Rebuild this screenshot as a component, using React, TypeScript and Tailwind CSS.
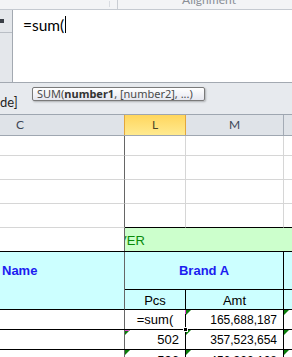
const Tri = () => (
  <span className="absolute top-0 left-0 w-0 h-0 border-t-[5px] border-r-[5px] border-t-[#0a7d0a] border-r-transparent" />
);

const gridRows = [20, 24, 24, 24];

export default function App() {
  return (
    <div className="w-[292px] h-[357px] overflow-hidden bg-white font-['Liberation_Sans',Arial,sans-serif] text-black">
      {/* ribbon bottom edge */}
      <div className="h-[10px] flex bg-[#f3f4f6] border-b border-[#c5cad1] overflow-hidden">
        <div className="w-[110px] border-r border-[#d9dce1] mt-[1px] h-[6px]" />
        <div className="w-[8px] border-r border-[#c9cdd3]" />
        <div className="flex-1 flex justify-center">
          <span className="-mt-[9px] text-[12px] text-[#8a8f96] font-['Lato',sans-serif] pl-[8px]">Alignment</span>
        </div>
      </div>

      {/* formula bar */}
      <div className="h-[73px] flex border-b border-[#a3a9b1]">
        <div className="w-[12px] bg-[#e4e7eb] flex flex-col">
          <div className="h-[23px] border-b border-[#b9bec5] relative">
            <span className="absolute left-0 top-[9px] w-[4px] h-[4px] bg-[#3a3f47]" />
          </div>
        </div>
        <div className="flex-1 bg-white border-l border-[#a3a9b1] pl-[10px] pt-[6px] flex items-start">
          <span className="font-['Lato',sans-serif] text-[15.5px] leading-[18px]">=sum(</span>
          <span className="w-[1px] h-[17px] bg-black ml-[1px]" />
        </div>
      </div>

      {/* area under formula bar, with the function tooltip */}
      <div className="h-[32px] bg-[#e7eaee] border-b border-[#9ea6b0] relative">
        <span className="absolute left-0 top-[12px] text-[13px] leading-[14px] text-[#222] font-['Lato',sans-serif]">de]</span>
        <div className="absolute left-[32px] top-[4px] w-[173px] h-[14px] rounded-[2px] border border-[#7a7a7a] bg-gradient-to-b from-white to-[#e6e7ef] shadow-[1px_1px_2px_rgba(0,0,0,0.25)] pl-[4px] flex items-center">
          <span className="font-['Noto_Sans',sans-serif] text-[11px] leading-[12px] text-[#4a4a4a] whitespace-nowrap">
            SUM(<b className="font-bold text-[#333]">number1</b>, [number2], ...)
          </span>
        </div>
      </div>

      {/* column headers */}
      <div className="h-[21px] flex bg-[#dfe3e8] border-b border-[#9fa7b1] font-['Lato',sans-serif] text-[12px] text-[#3b4656]">
        <div className="w-[124px] pl-[16px] flex items-center">C</div>
        <div className="w-[62px] border-x border-[#e3a73b] bg-gradient-to-b from-[#ffd65c] to-[#ffea8f] flex items-center justify-center text-[#4a4426]">L</div>
        <div className="w-[98px] border-r border-[#a4abb5] flex items-center justify-center">M</div>
        <div className="flex-1" />
      </div>

      {/* empty rows */}
      {gridRows.map((h, i) => (
        <div key={i} className="flex" style={{ height: h }}>
          <div className="w-[125px] border-r border-[#666] border-b border-b-[#d6d6d6]" />
          <div className={`w-[61px] border-r border-[#d6d6d6] border-b ${i === 3 ? "border-b-black" : "border-b-[#d6d6d6]"}`} />
          <div className={`w-[98px] border-r border-[#d6d6d6] border-b ${i === 3 ? "border-b-black" : "border-b-[#d6d6d6]"}`} />
          <div className={`flex-1 border-b ${i === 3 ? "border-b-black" : "border-b-[#d6d6d6]"}`} />
        </div>
      ))}

      {/* title row */}
      <div className="h-[24px] flex border-b border-black">
        <div className="w-[125px] border-r border-[#666]" />
        <div className="flex-1 bg-[#ccffcc] overflow-hidden flex items-end pb-[3px]">
          <span className="-ml-[17px] text-[13px] leading-[15px] text-[#098a09] whitespace-nowrap">OVER</span>
        </div>
      </div>

      {/* header block */}
      <div className="flex bg-[#ccffff] text-[13px]">
        <div className="w-[125px] h-[58px] border-r border-[#666] border-b border-b-black">
          <div className="h-[38px] flex items-center pl-[2px] font-bold text-[#1c1cf0]">Name</div>
        </div>
        <div className="flex-1 flex flex-col">
          <div className="h-[38px] flex border-b border-black">
            <div className="w-[159px] border-r border-black flex items-center justify-center font-bold text-[#1c1cf0]">Brand A</div>
            <div className="flex-1" />
          </div>
          <div className="h-[20px] flex border-b border-black leading-[15px]">
            <div className="w-[61px] border-r border-black flex items-end justify-center pb-[1px]">Pcs</div>
            <div className="w-[98px] border-r border-black flex items-end justify-center pb-[1px]">Amt</div>
            <div className="flex-1" />
          </div>
        </div>
      </div>

      {/* data rows */}
      <div className="flex h-[20px] border-b border-black text-[12px] leading-[14px]">
        <div className="w-[125px] border-r border-[#666]" />
        <div className="w-[61px] border-r border-black relative flex items-end justify-center pb-[2px] text-[13px]">
          =sum(
          <span className="absolute right-[-1px] top-0 w-[1px] h-[4px] bg-[#e040d0]" />
          <span className="absolute right-[-3px] bottom-[-3px] w-[5px] h-[5px] bg-black border border-white z-10" />
        </div>
        <div className="w-[98px] border-r border-black relative flex items-end justify-end pr-[6px] pb-[2px]">
          <Tri />
          165,688,187
        </div>
        <div className="flex-1 relative">
          <Tri />
        </div>
      </div>
      <div className="flex h-[20px] border-b border-black text-[12px] leading-[14px]">
        <div className="w-[125px] border-r border-[#666]" />
        <div className="w-[61px] border-r border-black relative flex items-end justify-end pr-[6px] pb-[2px] text-[13px]">
          <Tri />
          <span className="absolute left-0 top-0 w-[4px] h-[1px] bg-[#e040d0]" />
          502
        </div>
        <div className="w-[98px] border-r border-black relative flex items-end justify-end pr-[6px] pb-[2px]">
          <Tri />
          357,523,654
        </div>
        <div className="flex-1 relative">
          <Tri />
        </div>
      </div>
      <div className="flex h-[20px] text-[12px] leading-[14px]">
        <div className="w-[125px] border-r border-[#666]" />
        <div className="w-[61px] border-r border-black relative flex items-end justify-end pr-[6px] pb-[2px] text-[13px]">
          <Tri />
          596
        </div>
        <div className="w-[98px] border-r border-black relative flex items-end justify-end pr-[6px] pb-[2px]">
          <Tri />
          456,322,108
        </div>
        <div className="flex-1 relative">
          <Tri />
        </div>
      </div>
    </div>
  );
}
